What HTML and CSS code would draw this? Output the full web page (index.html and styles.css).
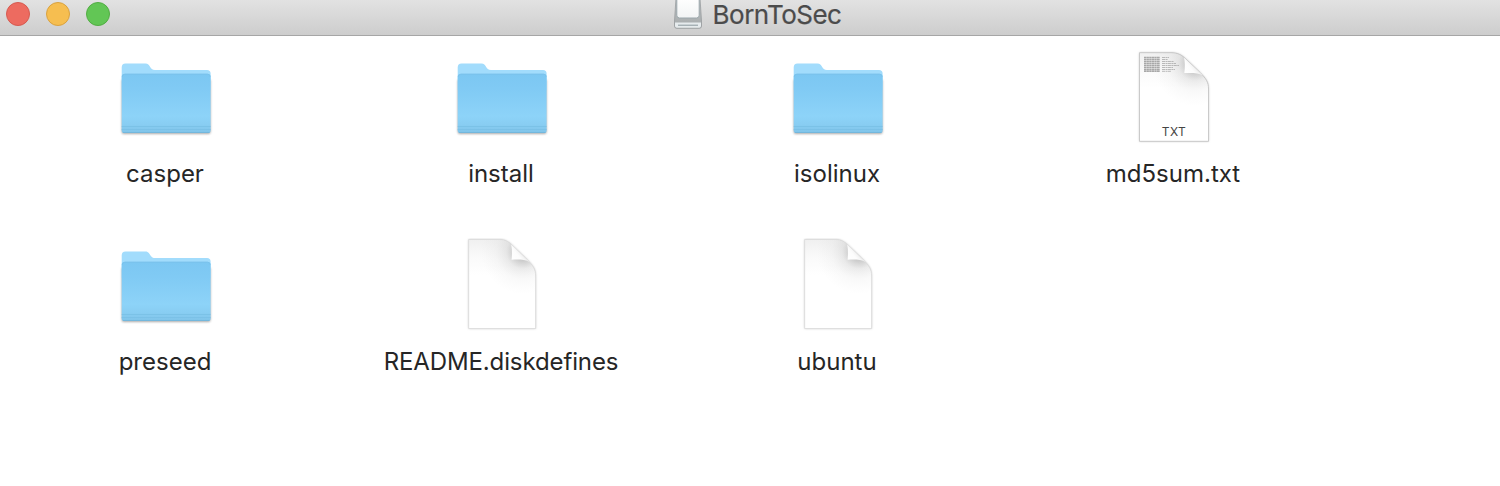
FILE: index.html
```html
<!DOCTYPE html>
<html lang="en">
<head>
<meta charset="utf-8">
<title>BornToSec</title>
<link rel="stylesheet" href="styles.css">
</head>
<body>
<svg class="defs" width="0" height="0" aria-hidden="true">
  <defs>
    <linearGradient id="front" x1="0" y1="0" x2="0" y2="1">
      <stop offset="0" stop-color="#7cc7f2"/><stop offset=".25" stop-color="#80caf4"/><stop offset=".72" stop-color="#8dd3f8"/><stop offset=".86" stop-color="#88cdf2"/><stop offset="1" stop-color="#80c4e9"/>
    </linearGradient>
    <linearGradient id="topshade" x1="0" y1="0" x2="0" y2="1">
      <stop offset="0" stop-color="#f0f0f0"/><stop offset=".2" stop-color="#fafafa"/><stop offset=".4" stop-color="#fff"/>
    </linearGradient>
    <radialGradient id="curlshade" cx="70" cy="14" r="42" gradientUnits="userSpaceOnUse">
      <stop offset="0" stop-color="#888" stop-opacity=".6"/><stop offset=".22" stop-color="#909090" stop-opacity=".42"/><stop offset=".4" stop-color="#999" stop-opacity=".18"/><stop offset=".65" stop-color="#aaa" stop-opacity=".07"/><stop offset="1" stop-color="#bbb" stop-opacity="0"/>
    </radialGradient>
    <linearGradient id="curl" x1="59" y1="22" x2="69" y2="14" gradientUnits="userSpaceOnUse">
      <stop offset="0" stop-color="#fff"/><stop offset=".6" stop-color="#fcfcfc"/><stop offset="1" stop-color="#ececec"/>
    </linearGradient>
    <symbol id="folder" viewBox="0 0 96 96">
      <path class="folder-shadow" d="M4.700 30H93.500V82Q93.500 84 91.500 84H6.700Q4.700 84 4.700 82Z"/>
      <path fill="#a2dcfc" d="M4.700 17.500Q4.700 13.500 8.500 13.500H28.500C33.500 13.500 32.500 20 38 20H90Q93.600 20 93.600 23.500V40H4.700Z"/>
      <path fill="url(#front)" d="M4.700 27Q4.700 23.700 8 23.700H90.500Q93.600 23.700 93.600 27V80.500Q93.600 83 91 83H7.200Q4.700 83 4.700 80.500Z"/>
      <path class="folder-rim" d="M5.200 27Q5.200 24.200 8 24.200H90.500Q93.200 24.200 93.200 27"/>
      <path class="folder-lines" d="M4.700 76.500H93.600M4.700 79.500H93.600"/>
      <path class="folder-base" d="M6 82.500H92.500"/>
    </symbol>
    <symbol id="page" viewBox="0 0 96 96">
      <path class="page-shadow" d="M15.700 1.500H46C53 1.500 56 4 61 9L74 21.500C80 27.500 82.600 31 82.600 38V90.500H15.700Z"/>
      <path fill="url(#topshade)" d="M15.700 1.500H46C53 1.500 56 4 61 9L74 21.500C80 27.500 82.600 31 82.600 38V90.500H15.700Z"/>
      <path class="page-edge" fill="url(#curlshade)" d="M15.700 1.500H46C53 1.500 56 4 61 9L74 21.500C80 27.500 82.600 31 82.600 38V90.500H15.700Z"/>
      <path fill="url(#curl)" d="M58.200 6.500L76.500 24C72 21.300 66 21.500 58.600 21.700Q59.500 13 58.200 6.500Z"/>
    </symbol>
  </defs>
</svg>
<div class="window">
  <header class="titlebar">
    <div class="controls"><span class="dot close"></span><span class="dot minimize"></span><span class="dot expand"></span></div>
    <div class="title">
      <svg class="drive" viewBox="0 0 30 30">
        <defs>
          <linearGradient id="plate" x1="0" y1="0" x2="0" y2="1"><stop offset="0" stop-color="#fff"/><stop offset="1" stop-color="#f2f4f5"/></linearGradient>
          <linearGradient id="body" x1="0" y1="0" x2="0" y2="1"><stop offset="0" stop-color="#c4c9cb"/><stop offset="1" stop-color="#a4a8a9"/></linearGradient>
        </defs>
        <path fill="url(#body)" stroke="#929799" stroke-width=".7" d="M3-2H27L28.500 21V26Q28.500 28.300 26.500 28.300H3.500Q1.500 28.300 1.500 26V21Z"/>
        <path fill="url(#plate)" stroke="#9aa6aa" stroke-width="1" d="M3.800-2H26.200V15.300Q26.200 18 23.500 18H6.500Q3.800 18 3.800 15.300Z"/>
        <path fill="#e6ebed" d="M2 22.500H28V26Q28 27.700 26.300 27.700H3.700Q2 27.700 2 26Z"/>
        <path stroke="#7f8e94" stroke-width=".9" d="M5 25.200H25"/>
      </svg>
      <span class="title-text">BornToSec</span>
    </div>
  </header>
  <main class="files">
    <div class="file"><svg class="icon"><use href="#folder"/></svg><span class="label">casper</span></div>
    <div class="file"><svg class="icon"><use href="#folder"/></svg><span class="label">install</span></div>
    <div class="file"><svg class="icon"><use href="#folder"/></svg><span class="label">isolinux</span></div>
    <div class="file"><svg class="icon" viewBox="0 0 96 96">
      <path class="page-shadow strong" d="M14.500 2.700H46C53 2.700 57 5 62 10L75 22.500C81 28.500 83.500 32 83.500 39V91.300H14.500Z"/>
      <path fill="url(#topshade)" d="M14.500 2.700H46C53 2.700 57 5 62 10L75 22.500C81 28.500 83.500 32 83.500 39V91.300H14.500Z"/>
      <path class="page-edge strong" fill="url(#curlshade)" d="M14.500 2.700H46C53 2.700 57 5 62 10L75 22.500C81 28.500 83.500 32 83.500 39V91.300H14.500Z"/>
      <path fill="url(#curl)" d="M59 7.500L78 25.500C73 22.600 67 22.800 59.300 23Q60.500 14 59 7.500Z"/>
      <path class="print dense" d="M19 7.500H35M19 9.500H35M19 11.500H35M19 13.500H35M19 15.500H35M19 17.500H35M19 19.500H35M19 21.300H35"/>
      <path class="print" d="M37 7.500H44M37 9.500H43M37 11.500H49M37 13.500H51M37 15.500H54M37 17.500H48M37 19.500H50M37 21.300H46"/>
      <text class="kind" x="49" y="86" text-anchor="middle">TXT</text>
    </svg><span class="label">md5sum.txt</span></div>
    <div class="file"><svg class="icon"><use href="#folder"/></svg><span class="label">preseed</span></div>
    <div class="file"><svg class="icon"><use href="#page"/></svg><span class="label tight">README.diskdefines</span></div>
    <div class="file"><svg class="icon"><use href="#page"/></svg><span class="label">ubuntu</span></div>
  </main>
</div>
</body>
</html>
```
FILE: styles.css
```css
body { margin: 0; background: #fff; font-family: Inter, "Liberation Sans", sans-serif; color: #262626; }
.defs { display: block; }
.window { height: 486px; overflow: hidden; }
.titlebar { display: grid; grid-template-columns: 1fr auto 1fr; height: 36px; box-sizing: border-box; background: linear-gradient(#e2e2e2, #cdcdcd); border-bottom: 1px solid #a6a6a6; }
.controls { display: flex; gap: 16px; padding: 2px 0 0 6px; }
.dot { box-sizing: border-box; width: 24px; height: 24px; border-radius: 50%; border: 1px solid; }
.close { background: #ed6b60; border-color: #d65a50; }
.minimize { background: #f6be50; border-color: #d9a240; }
.expand { background: #62c655; border-color: #52ad43; }
.title { display: flex; gap: 10px; padding-left: 14px; }
.drive { width: 30px; height: 30px; }
.title-text { font-size: 26px; line-height: 30px; color: #4b4b4b; letter-spacing: -0.5px; -webkit-text-stroke: .2px #4b4b4b; }
.files { display: grid; grid-template-columns: repeat(4, 336px); grid-auto-rows: 188px; margin-left: -3px; padding-top: 14px; }
.file { display: flex; flex-direction: column; align-items: center; }
.icon { display: block; width: 96px; height: 96px; }
.label { margin-top: 13px; font-size: 24px; line-height: 30px; white-space: nowrap; }
.tight { letter-spacing: -0.12px; }
.folder-shadow { fill: #aaa; filter: blur(1px); }
.folder-rim { fill: none; stroke: #78c0ea; stroke-width: .7; }
.folder-lines { fill: none; stroke: #79bfe5; stroke-width: .8; }
.folder-base { fill: none; stroke: #74b7dc; stroke-width: 1; }
.page-shadow { fill: #ccc; filter: drop-shadow(0 .5px .8px #bbb); }
.page-edge { stroke: #dcdcdc; stroke-width: .8; }
.page-edge.strong { stroke: #c2c2c2; }
.print { fill: none; stroke: #aaa; stroke-width: .8; stroke-dasharray: 3 .5 2 .4; }
.print.dense { stroke: #a8a8a8; stroke-width: 1.600; stroke-dasharray: 2.300 .3; }
.kind { font-size: 12px; letter-spacing: .5px; fill: #444; }
```
